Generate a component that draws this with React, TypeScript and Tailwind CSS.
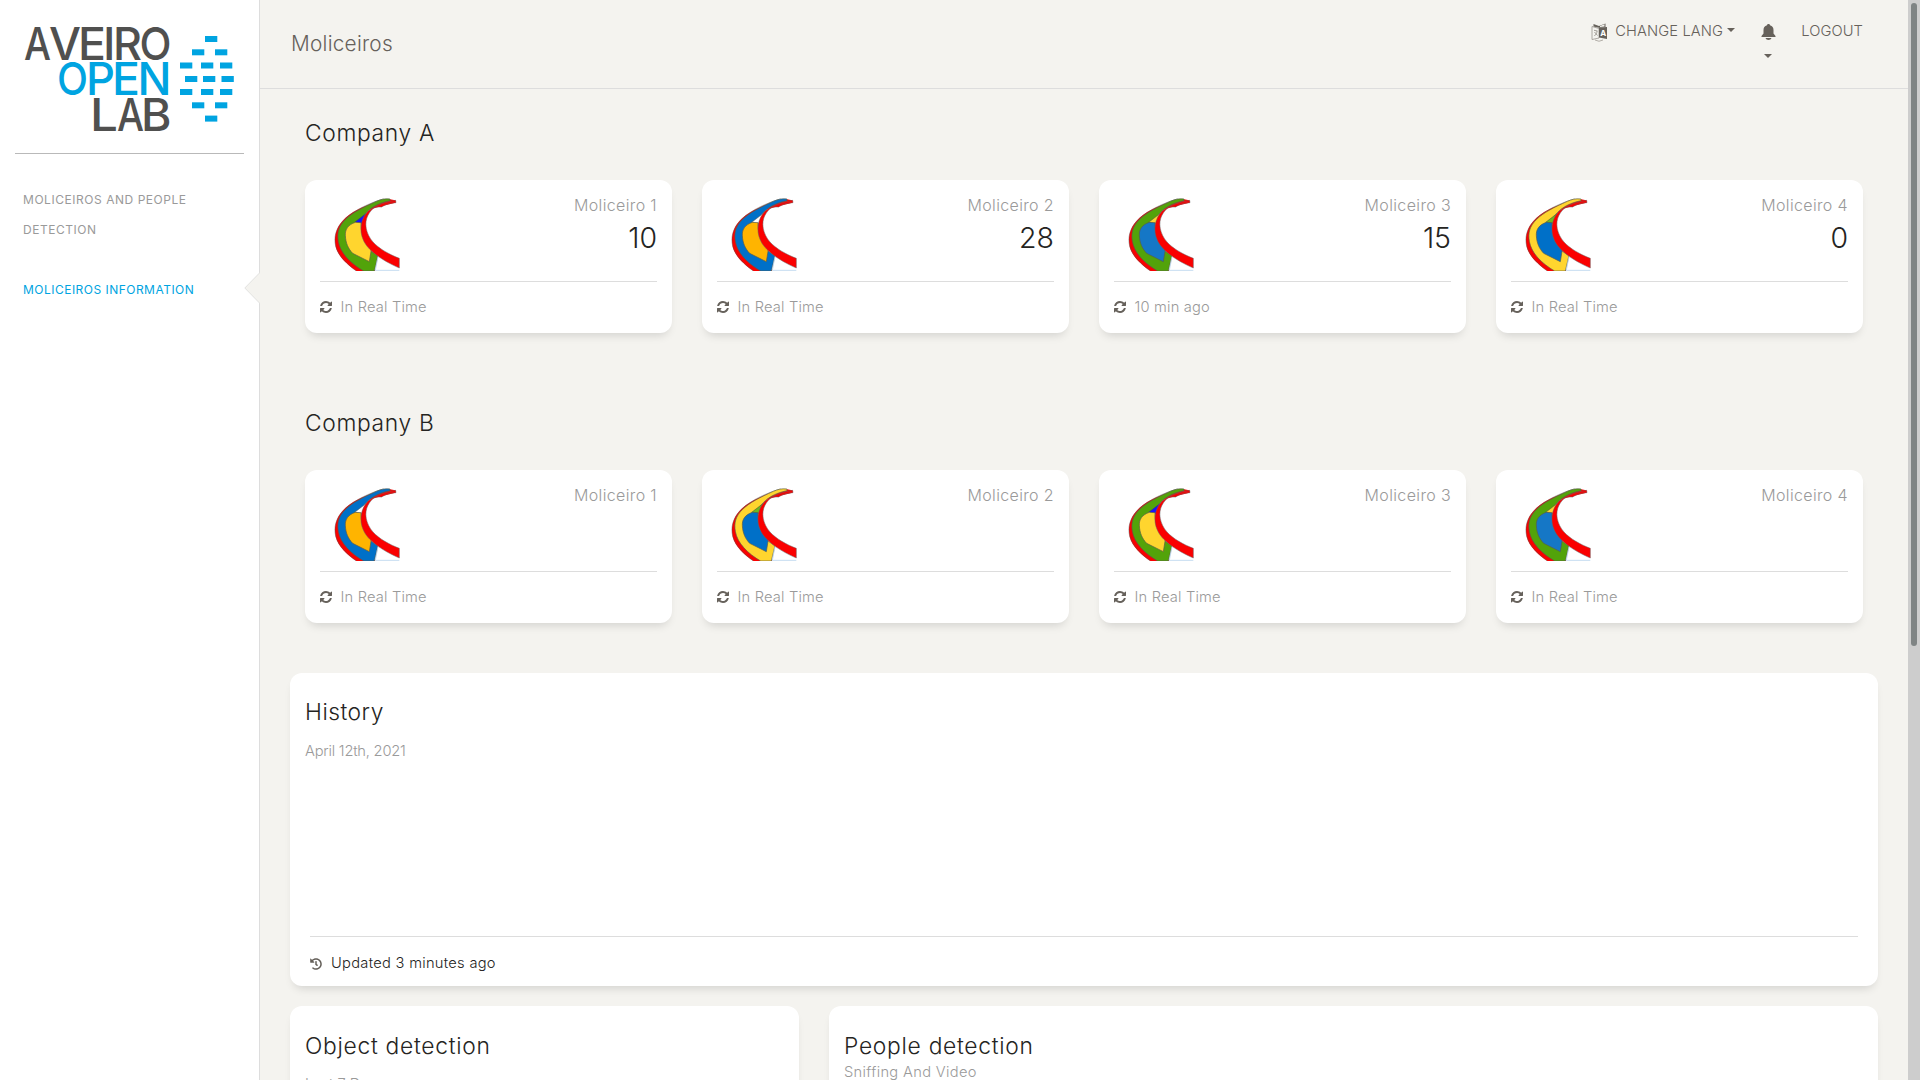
import { FaHistory } from "react-icons/fa";

type Palette = { hull: string; panel: string; tip: string };
type Boat = { name: string; value?: string; status: string; palette: Palette };

const greenYellow: Palette = { hull: "#52a30a", panel: "#ffd52e", tip: "#1414ff" };
const blueOrange: Palette = { hull: "#0070c8", panel: "#ffb400", tip: "#ffffff" };
const greenBlue: Palette = { hull: "#52a30a", panel: "#1577c6", tip: "#ffd52e" };
const yellowBlue: Palette = { hull: "#ffd52e", panel: "#0070c8", tip: "#6cb81e" };

const companies: { title: string; boats: Boat[] }[] = [
  {
    title: "Company A",
    boats: [
      { name: "Moliceiro 1", value: "10", status: "In Real Time", palette: greenYellow },
      { name: "Moliceiro 2", value: "28", status: "In Real Time", palette: blueOrange },
      { name: "Moliceiro 3", value: "15", status: "10 min ago", palette: greenBlue },
      { name: "Moliceiro 4", value: "0", status: "In Real Time", palette: yellowBlue },
    ],
  },
  {
    title: "Company B",
    boats: [
      { name: "Moliceiro 1", status: "In Real Time", palette: blueOrange },
      { name: "Moliceiro 2", status: "In Real Time", palette: yellowBlue },
      { name: "Moliceiro 3", status: "In Real Time", palette: greenYellow },
      { name: "Moliceiro 4", status: "In Real Time", palette: greenBlue },
    ],
  },
];

function BoatIcon({ palette }: { palette: Palette }) {
  return (
    <svg className="block h-[73px] w-[66px]" viewBox="41 24 198 219">
      <path d="M205 27 C165 34 100 58 72 87 C46 112 40 142 46 170 C53 200 82 225 108 243 L165 243 L110 200 L80 110 L140 60 L225 38 L225 31 Z" fill="#fa0000" />
      <path d="M190 27 C160 34 100 60 72 88 C46 114 40 142 46 168 C54 198 82 224 108 243" fill="none" stroke="#555" strokeWidth="2" strokeOpacity=".7" />
      <path d="M209 27 C192 25 182 28 168 34 C130 51 96 68 76 88 C54 109 50 130 54 154 C60 190 92 221 130 243 L162 243 L173 197 L148 180 C122 150 116 110 130 78 C146 56 170 40 209 32 Z" fill={palette.hull} stroke="#5a5a4a" strokeWidth="2" />
      <path d="M103 97 L138 70 L124 101 Z" fill={palette.tip} stroke="#444" strokeWidth="1.500" />
      <path d="M105 97 C84 104 74 118 75 136 C76 160 84 176 97 190 L147 215 L153 178 C134 160 121 132 122 98 Z" fill={palette.panel} stroke="#5a5a4a" strokeWidth="2" />
      <path d="M226 31 C195 36 150 50 136 72 C121 92 117 122 128 148 C140 180 184 211 237 234 L237 205 C208 194 176 176 158 156 C136 131 131 98 143 76 C150 63 158 53 170 51 L184 51 C195 43 210 39 227 38 Z" fill="#fa0000" stroke="#666" strokeWidth="1.500" />
      <path d="M173 200 L165 241 H237" fill="none" stroke="#b9d5ee" strokeWidth="2.500" />
    </svg>
  );
}

function RefreshIcon() {
  return (
    <svg className="size-3 shrink-0" viewBox="0 0 1536 1536" fill="#66615b">
      <path d="M1511 928q0 5-1 7-64 268-268 434.500T764 1536q-146 0-282.500-55T238 1324l-129 129q-19 19-45 19t-45-19-19-45V960q0-26 19-45t45-19h448q26 0 45 19t19 45-19 45l-137 137q71 66 161 102t187 36q134 0 250-65t186-179q11-17 53-117 8-23 30-23h192q13 0 22.500 9.500t9.500 22.500zm25-800v448q0 26-19 45t-45 19h-448q-26 0-45-19t-19-45 19-45l138-138Q969 256 768 256q-134 0-250 65T332 500q-11 17-53 117-8 23-30 23H50q-13 0-22.500-9.500T18 608v-7q65-268 270-434.500T768 0q146 0 284 55.500T1297 212l130-129q19-19 45-19t45 19 19 45z" />
    </svg>
  );
}

const logoLetters: [string, number, number, number, string][] = [
  ["A", 24, 59.500, 27, "#50504f"],
  ["V", 49, 59.500, 32, "#50504f"],
  ["E", 78, 59.500, 28, "#50504f"],
  ["I", 103, 59.500, 12.500, "#50504f"],
  ["R", 113, 59.500, 29, "#50504f"],
  ["O", 139.500, 59.500, 32, "#50504f"],
  ["O", 57, 95, 31, "#00a4e1"],
  ["P", 86, 95, 29, "#00a4e1"],
  ["E", 112, 95, 28, "#00a4e1"],
  ["N", 137.500, 95, 34, "#00a4e1"],
  ["L", 90, 130.500, 28, "#50504f"],
  ["A", 117, 130.500, 27, "#50504f"],
  ["B", 141, 130.500, 30.500, "#50504f"],
];

const logoBars: [number, number][] = [
  [205, 36], [192, 49.300], [215, 49.300],
  [180, 62.500], [201, 62.500], [220, 62.500],
  [185, 76], [203, 76], [221.500, 76],
  [180, 89], [201, 89], [220, 89],
  [192, 102.300], [215, 102.300], [205, 115.600],
];

function Logo() {
  return (
    <svg className="block h-[153px] w-[259px]" viewBox="0 0 259 153">
      {logoLetters.map(([ch, x, y, w, color], i) => (
        <text key={i} x={x} y={y} textLength={w} lengthAdjust="spacingAndGlyphs" fill={color} fontFamily="Inter, sans-serif" fontSize="45.500" fontWeight="500">
          {ch}
        </text>
      ))}
      {logoBars.map(([x, y], i) => (
        <rect key={i} x={x} y={y} width="12.300" height="6" fill="#00a4e1" />
      ))}
    </svg>
  );
}

function LangIcon() {
  return (
    <svg className="mt-[23px] h-[19px] w-[17px]" viewBox="0 0 17 19">
      <path d="M1 3.500 L8 5.500 V15 L1 16.500 Z" fill="none" stroke="#9a9690" strokeWidth=".8" />
      <path d="M2.500 1 L8 3 L14.500 .5 V4 L8 4.800 L2.500 3.500 Z" fill="#66615b" />
      <path d="M9 3 L13.500 1.300 V3.500 L9 4 Z" fill="#f4f3ef" />
      <path d="M8 4.500 L16 4 V16 L8 14.500 Z" fill="#66615b" />
      <path d="M3 7.300 L6.500 8 M3.300 13 C5 11.500 6 10 6 8 M3.500 9 L6.500 12.500" fill="none" stroke="#9a9690" strokeWidth=".9" />
      <text x="9.300" y="12.800" fontSize="8" fontWeight="700" fontFamily="Inter, sans-serif" fill="#fff">A</text>
      <path d="M4 17 Q8 19.500 12 17" fill="none" stroke="#aaa69f" strokeWidth=".9" />
    </svg>
  );
}

function Caret({ className }: { className: string }) {
  return <span className={`h-0 w-0 border-x-4 border-t-4 border-x-transparent border-t-[#66615b] ${className}`} />;
}

function Sidebar() {
  return (
    <aside className="relative h-full w-[260px] shrink-0 border-r border-[#dddddd] bg-white text-xs leading-[30px]">
      <Logo />
      <hr className="mx-[15px] border-[#b9b9b9]" />
      <nav className="ml-[23px] mt-[31px] flex flex-col gap-[30px]">
        <a className="tracking-[0.54px] text-[#9a9a9a]">
          MOLICEIROS AND PEOPLE
          <br />
          DETECTION
        </a>
        <a className="tracking-[0.48px] text-[#00a4e1]">MOLICEIROS INFORMATION</a>
      </nav>
      <svg className="absolute left-[244px] top-[272px] h-8 w-4" viewBox="0 0 16 32">
        <path d="M16 .5 L.8 16 L16 31.500 Z" fill="#f4f3ef" />
        <path d="M15.500 1 L.8 16 L15.500 31" fill="none" stroke="#e2e2e0" />
      </svg>
    </aside>
  );
}

function Header() {
  return (
    <header className="flex h-[89px] justify-between border-b border-[#dddddd] pl-[31px] pr-[45px] text-[#66615b]">
      <div className="mt-[29px] text-[20.800px] font-light leading-[30px] tracking-[0.24px]">Moliceiros</div>
      <div className="flex text-[14.700px] font-light leading-[30px]">
        <LangIcon />
        <span className="ml-[7px] mt-[15.500px] tracking-[0.12px]">CHANGE LANG</span>
        <Caret className="ml-[4px] mt-[28px]" />
        <div className="ml-[25.500px] mt-[24px] flex w-[15px] flex-col items-center">
          <svg className="h-4 w-[15px]" viewBox="0 0 15 16" fill="#66615b">
            <path d="M7.500 0C6.500 0 6 .6 6 1.300 3.600 1.900 2.500 3.700 2.500 6v3.500L.5 12v1h14v-1l-2-2.500V6C12.500 3.700 11.400 1.900 9 1.300 9 .6 8.500 0 7.500 0ZM4.500 14h6c-.4 1.200-1.600 2-3 2s-2.600-.8-3-2Z" />
          </svg>
          <Caret className="mt-[14px]" />
        </div>
        <span className="ml-[25.500px] mt-[15.500px] tracking-[0.1px]">LOGOUT</span>
      </div>
    </header>
  );
}

const cardClass = "rounded-xl bg-white shadow-[0_6px_10px_-4px_rgba(0,0,0,0.15)]";

function BoatCard({ boat }: { boat: Boat }) {
  return (
    <article className={`${cardClass} flex h-[153px] flex-col px-[15px] font-light text-[#9a9a9a]`}>
      <div className="flex h-[102px] justify-between border-b border-[#dddddd]">
        <div className="ml-[14px] mt-[18px]">
          <BoatIcon palette={boat.palette} />
        </div>
        <div className="mt-[13px] flex flex-col items-end">
          <div className="text-base leading-6 tracking-[0.36px]">{boat.name}</div>
          <div className="mt-[3px] text-[28.500px] leading-9 text-[#252422]">{boat.value}</div>
        </div>
      </div>
      <div className="mt-[13px] flex items-center gap-[8.500px] text-[14.700px] leading-6 tracking-[0.18px]">
        <RefreshIcon />
        {boat.status}
      </div>
    </article>
  );
}

const titleClass = "text-[22.800px] font-light leading-[30px] text-[#252422]";

export default function App() {
  return (
    <div className="flex h-[1080px] w-[1920px] overflow-hidden bg-[#f4f3ef] font-['Inter',sans-serif]">
      <Sidebar />
      <main className="w-[1648px] shrink-0">
        <Header />
        <div className="px-[30px] pt-[29px]">
          <div className="flex flex-col gap-[75px] px-[15px]">
            {companies.map((company) => (
              <section key={company.title}>
                <h2 className={`${titleClass} tracking-[0.66px]`}>{company.title}</h2>
                <div className="mt-8 grid grid-cols-4 gap-[30px]">
                  {company.boats.map((boat) => (
                    <BoatCard key={boat.name} boat={boat} />
                  ))}
                </div>
              </section>
            ))}
          </div>
          <section className={`${cardClass} mt-[50px] flex h-[313px] flex-col justify-between px-[15px] pt-6`}>
            <div>
              <h2 className={`${titleClass} tracking-[0.5px]`}>History</h2>
              <p className="mt-[12px] text-[14.700px] font-light leading-6 tracking-[-0.22px] text-[#9a9a9a]">April 12th, 2021</p>
            </div>
            <div className="mx-[5px] flex h-[50px] items-center gap-[9px] border-t border-[#dddddd] pt-[4px] text-[14.700px] font-light tracking-[0.28px] text-[#252422]">
              <FaHistory className="size-3 text-[#66615b]" />
              Updated 3 minutes ago
            </div>
          </section>
          <div className="mt-5 flex gap-[30px]">
            <section className={`${cardClass} h-[300px] w-[509px] px-[15px] pt-[25px]`}>
              <h2 className={`${titleClass} tracking-[0.72px]`}>Object detection</h2>
              <p className="mt-[11px] text-[14.700px] font-light leading-6 text-[#9a9a9a]">Last 7 Days</p>
            </section>
            <section className={`${cardClass} h-[300px] flex-1 px-[15px] pt-[25px]`}>
              <h2 className={`${titleClass} tracking-[0.72px]`}>People detection</h2>
              <p className="mt-[-1px] text-[14.700px] font-light leading-6 tracking-[0.32px] text-[#9a9a9a]">Sniffing And Video</p>
            </section>
          </div>
        </div>
      </main>
      <div className="h-full w-3 shrink-0 bg-[#cdcdcd] px-[3px] pt-[3px]">
        <div className="h-[643px] w-1.5 rounded-full bg-[#7f8484]" />
      </div>
    </div>
  );
}
